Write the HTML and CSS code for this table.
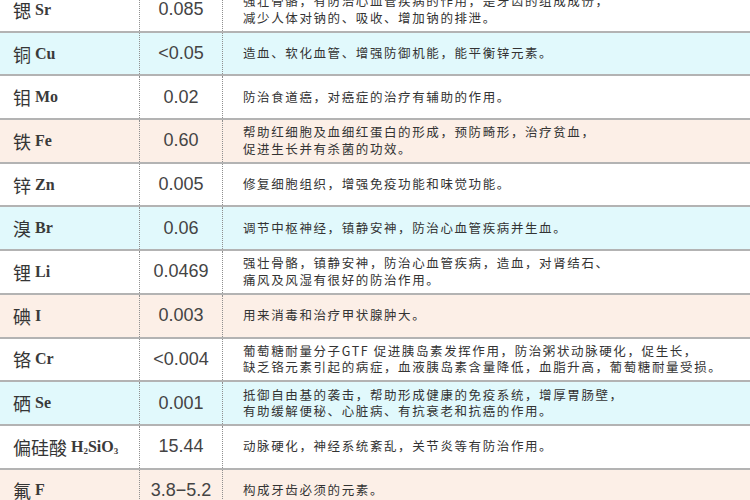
FILE: index.html
```html
<!DOCTYPE html>
<html lang="zh">
<head>
<meta charset="utf-8">
<link rel="stylesheet" href="styles.css">
</head>
<body>
<div class="table">
  <div class="row">
    <div class="name">锶 <span class="sym">Sr</span></div>
    <div class="val">0.085</div>
    <div class="desc"><div>强壮骨骼，有防治心血管疾病的作用，是牙齿的组成成份，</div><div>减少人体对钠的、吸收、增加钠的排泄。</div></div>
  </div>
  <div class="row blue">
    <div class="name">铜 <span class="sym">Cu</span></div>
    <div class="val">&lt;0.05</div>
    <div class="desc"><div>造血、软化血管、增强防御机能，能平衡锌元素。</div></div>
  </div>
  <div class="row">
    <div class="name">钼 <span class="sym">Mo</span></div>
    <div class="val">0.02</div>
    <div class="desc"><div>防治食道癌，对癌症的治疗有辅助的作用。</div></div>
  </div>
  <div class="row peach">
    <div class="name">铁 <span class="sym">Fe</span></div>
    <div class="val">0.60</div>
    <div class="desc"><div>帮助红细胞及血细红蛋白的形成，预防畸形，治疗贫血，</div><div>促进生长并有杀菌的功效。</div></div>
  </div>
  <div class="row">
    <div class="name">锌 <span class="sym">Zn</span></div>
    <div class="val">0.005</div>
    <div class="desc"><div>修复细胞组织，增强免疫功能和味觉功能。</div></div>
  </div>
  <div class="row blue">
    <div class="name">溴 <span class="sym">Br</span></div>
    <div class="val">0.06</div>
    <div class="desc"><div>调节中枢神经，镇静安神，防治心血管疾病并生血。</div></div>
  </div>
  <div class="row">
    <div class="name">锂 <span class="sym">Li</span></div>
    <div class="val">0.0469</div>
    <div class="desc"><div>强壮骨骼，镇静安神，防治心血管疾病，造血，对肾结石、</div><div>痛风及风湿有很好的防治作用。</div></div>
  </div>
  <div class="row peach">
    <div class="name">碘 <span class="sym">I</span></div>
    <div class="val">0.003</div>
    <div class="desc"><div>用来消毒和治疗甲状腺肿大。</div></div>
  </div>
  <div class="row">
    <div class="name">铬 <span class="sym">Cr</span></div>
    <div class="val">&lt;0.004</div>
    <div class="desc"><div>葡萄糖耐量分子GTF 促进胰岛素发挥作用，防治粥状动脉硬化，促生长，</div><div>缺乏铬元素引起的病症，血液胰岛素含量降低，血脂升高，葡萄糖耐量受损。</div></div>
  </div>
  <div class="row blue">
    <div class="name">硒 <span class="sym">Se</span></div>
    <div class="val">0.001</div>
    <div class="desc"><div>抵御自由基的袭击，帮助形成健康的免疫系统，增厚胃肠壁，</div><div>有助缓解便秘、心脏病、有抗衰老和抗癌的作用。</div></div>
  </div>
  <div class="row">
    <div class="name">偏硅酸 <span class="sym">H<sub>2</sub>SiO<sub>3</sub></span></div>
    <div class="val">15.44</div>
    <div class="desc"><div>动脉硬化，神经系统紊乱，关节炎等有防治作用。</div></div>
  </div>
  <div class="row peach">
    <div class="name">氟 <span class="sym">F</span></div>
    <div class="val">3.8−5.2</div>
    <div class="desc"><div>构成牙齿必须的元素。</div></div>
  </div>
</div>
</body>
</html>
```

FILE: styles.css
```css
html, body {
  margin: 0;
  padding: 0;
  background: #ffffff;
  overflow: hidden;
}
body {
  width: 750px;
  height: 500px;
}
.table {
  margin-top: -11px;
  width: 750px;
}
.row {
  display: grid;
  grid-template-columns: 140px 83px 1fr;
  height: 43.7px;
  box-sizing: border-box;
  border-bottom: 2px solid #b3b3b3;
  background: #ffffff;
}
.row.blue { background: #e1f9fc; }
.row.peach { background: #fcefe7; }
.name, .val, .desc {
  display: flex;
  align-items: center;
  border-right: 1px dotted #8f8f8f;
  overflow: hidden;
  white-space: nowrap;
}
.name {
  padding-left: 13px;
  font-family: "Noto Sans CJK SC", sans-serif;
  font-size: 18px;
  color: #353535;
}
.sym {
  font-family: "Liberation Serif", serif;
  font-size: 16px;
  font-weight: bold;
  color: #3a3a3a;
  margin-left: 4px;
}
.sym sub {
  font-size: 9px;
  vertical-align: -2px;
  line-height: 0;
}
.val {
  justify-content: center;
  font-family: "Liberation Sans", sans-serif;
  font-size: 18px;
  color: #444444;
}
.desc {
  border-right: none;
  padding-left: 20px;
  flex-direction: column;
  align-items: flex-start;
  justify-content: center;
  font-family: "Noto Sans CJK SC", sans-serif;
  font-size: 12.5px;
  letter-spacing: 1.6px;
  line-height: 16.5px;
  color: #333333;
}
```
